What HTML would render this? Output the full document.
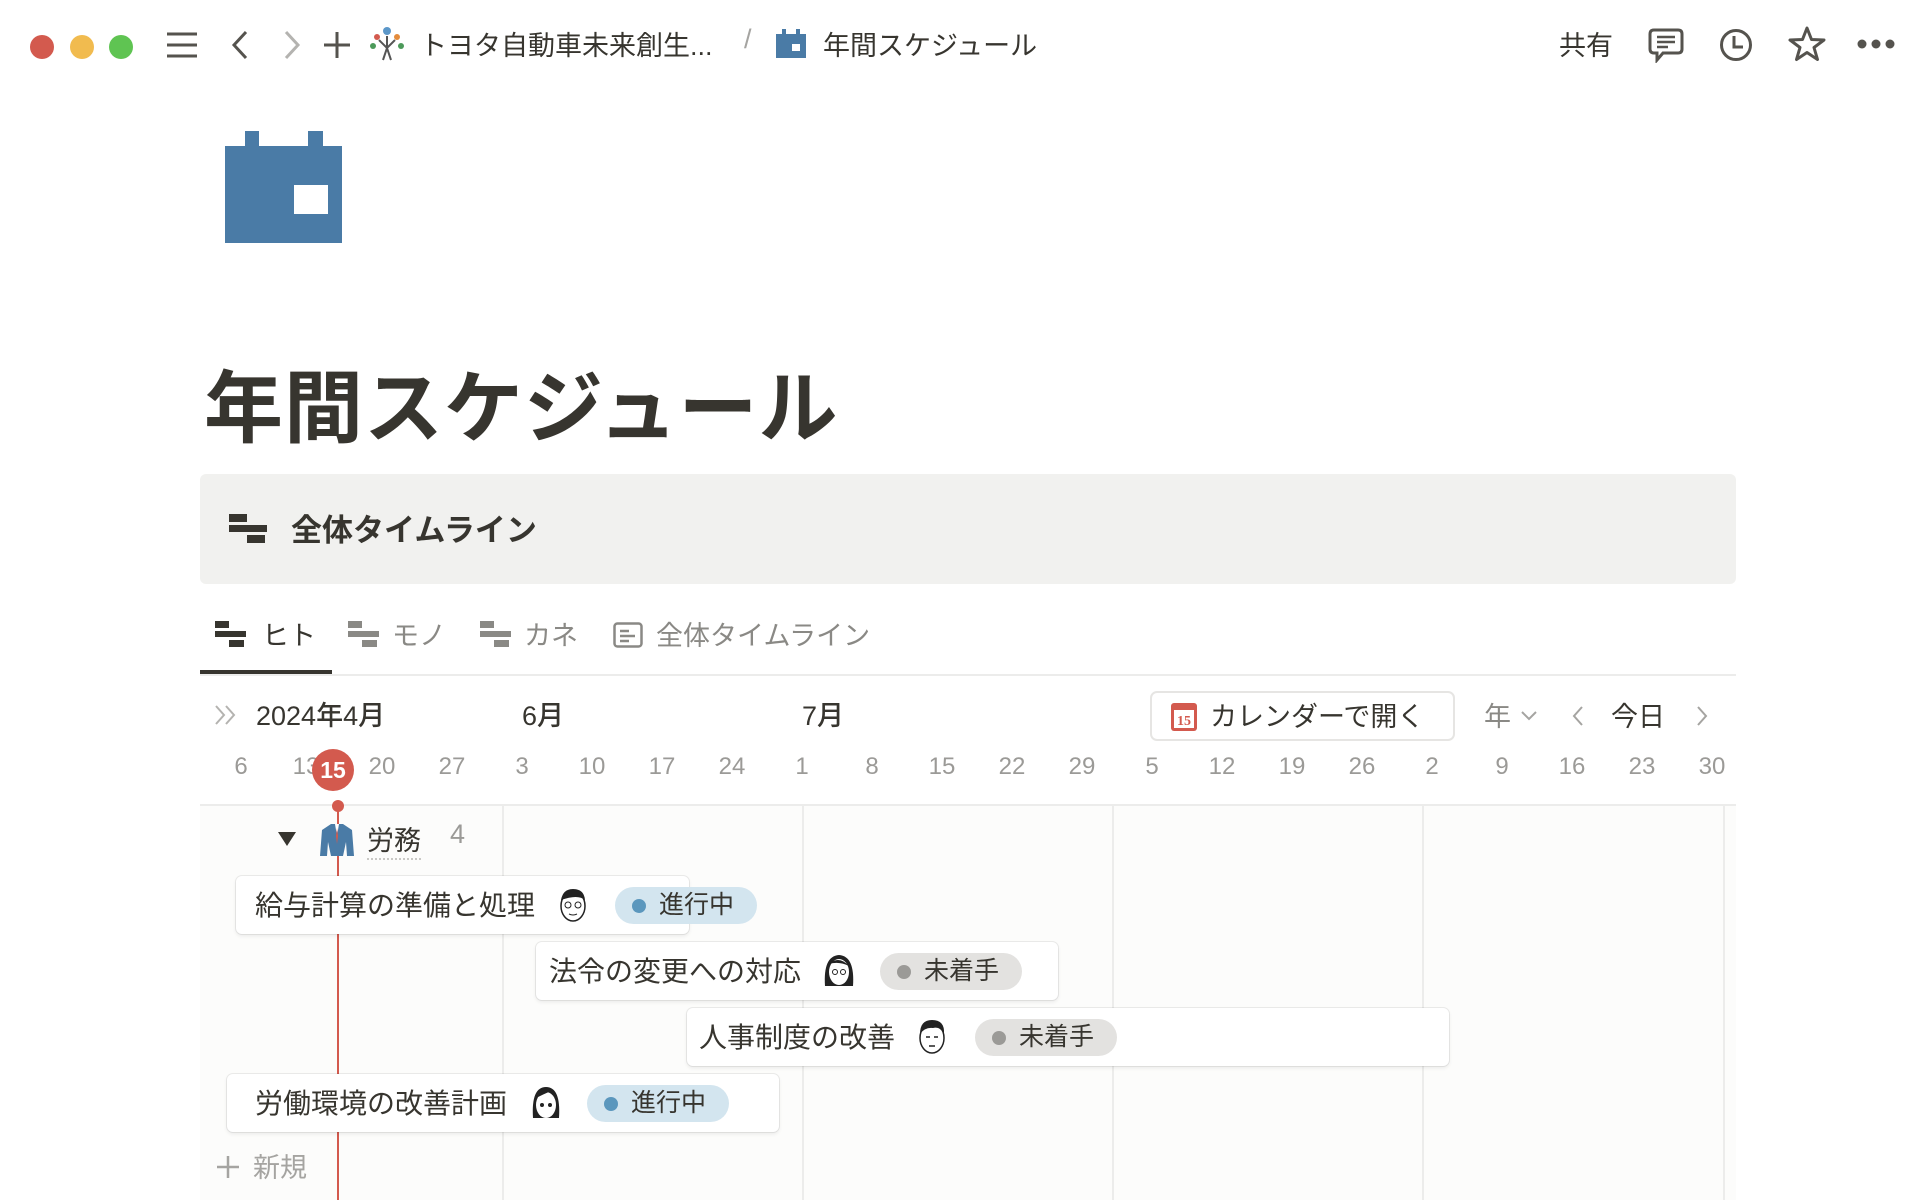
<!DOCTYPE html>
<html><head><meta charset="utf-8"><style>
*{margin:0;padding:0;box-sizing:border-box}
body{width:1920px;height:1200px;background:#fff;font-family:"Liberation Sans","Noto Sans CJK JP",sans-serif;color:#37352f;position:relative;overflow:hidden}
.a{position:absolute;white-space:nowrap}
.dot{position:absolute;width:24px;height:24px;border-radius:50%;top:35px}
.num{position:absolute;top:753px;font-size:24px;color:#9b9a97;width:60px;text-align:center;margin-left:-30px}
.vl{position:absolute;top:806px;bottom:0;width:2px;background:#ececeb}
.card{position:absolute;background:#fff;border-radius:6px;box-shadow:0 0 0 1px rgba(15,15,15,.07),0 2px 4px rgba(15,15,15,.08);height:58px}
.card .t{position:absolute;left:19px;top:8px;font-size:28px}
.av{position:absolute;width:34px;height:38px;top:10px}
.pill{position:absolute;top:11px;height:37px;border-radius:19px;font-size:25px;line-height:37px;padding-left:44px}
.pill:before{content:"";position:absolute;left:17px;top:12px;width:14px;height:14px;border-radius:50%}
.p1{background:#d3e5ef;width:142px}.p1:before{background:#5b97bd}
.p2{background:#e3e2e0;width:142px}.p2:before{background:#9b9a97}
</style></head><body>
<div class="dot" style="left:30px;background:#d35a4e"></div>
<div class="dot" style="left:70px;background:#f1bb4f"></div>
<div class="dot" style="left:109px;background:#5fc452"></div>
<svg class="a" style="left:165px;top:30px" width="34" height="30"><g stroke="#55534e" stroke-width="3"><line x1="2" y1="4" x2="32" y2="4"/><line x1="2" y1="15" x2="32" y2="15"/><line x1="2" y1="26" x2="32" y2="26"/></g></svg>
<svg class="a" style="left:228px;top:29px" width="24" height="32"><path d="M18 3 L6 16 L18 29" stroke="#55534e" stroke-width="3" fill="none"/></svg>
<svg class="a" style="left:280px;top:29px" width="24" height="32"><path d="M6 3 L18 16 L6 29" stroke="#b4b3b0" stroke-width="3" fill="none"/></svg>
<svg class="a" style="left:322px;top:30px" width="30" height="30"><g stroke="#55534e" stroke-width="3"><line x1="15" y1="2" x2="15" y2="28"/><line x1="2" y1="15" x2="28" y2="15"/></g></svg>
<svg class="a" style="left:369px;top:26px" width="36" height="38"><circle cx="18" cy="5" r="4" fill="#5b97c9"/><circle cx="8" cy="11" r="3" fill="#d35a4e"/><circle cx="28" cy="11" r="3" fill="#e38b3c"/><circle cx="4" cy="20" r="3" fill="#4c9a5a"/><circle cx="32" cy="20" r="3" fill="#4c9a5a"/><path d="M18 10 L18 22 M10 14 L18 22 L26 14 M14 34 L18 22 L22 34" stroke="#555" stroke-width="2" fill="none"/></svg>
<div class="a" style="left:420px;top:24px;font-size:27px">トヨタ自動車未来創生...</div>
<div class="a" style="left:744px;top:24px;font-size:27px;color:#a5a4a1">/</div>
<svg class="a" style="left:776px;top:28px" width="30" height="30"><rect x="0" y="6" width="30" height="24" fill="#4a7ba6"/><rect x="6" y="1" width="4" height="6" fill="#4a7ba6"/><rect x="20" y="1" width="4" height="6" fill="#4a7ba6"/><rect x="16" y="16" width="8" height="7" fill="#fff"/></svg>
<div class="a" style="left:823px;top:24px;font-size:27px">年間スケジュール</div>
<div class="a" style="left:1559px;top:24px;font-size:27px">共有</div>
<svg class="a" style="left:1648px;top:27px" width="36" height="36"><path d="M6 3 H30 Q34 3 34 7 V22 Q34 26 30 26 H15 L9 33 V26 H6 Q2 26 2 22 V7 Q2 3 6 3 Z" stroke="#55534e" stroke-width="3" fill="none"/><g stroke="#55534e" stroke-width="2.5"><line x1="9" y1="10" x2="27" y2="10"/><line x1="9" y1="15" x2="27" y2="15"/><line x1="9" y1="20" x2="20" y2="20"/></g></svg>
<svg class="a" style="left:1719px;top:28px" width="34" height="34"><circle cx="17" cy="17" r="14.5" stroke="#55534e" stroke-width="3" fill="none"/><path d="M15 8 V19 H24" stroke="#55534e" stroke-width="3" fill="none"/></svg>
<svg class="a" style="left:1788px;top:26px" width="38" height="36"><path d="M19 2 L23.5 13.5 L36 14 L26 21.5 L29.5 33.5 L19 26.5 L8.5 33.5 L12 21.5 L2 14 L14.5 13.5 Z" stroke="#55534e" stroke-width="3" fill="none" stroke-linejoin="round"/></svg>
<svg class="a" style="left:1857px;top:38px" width="38" height="12"><circle cx="5" cy="6" r="4.5" fill="#55534e"/><circle cx="19" cy="6" r="4.5" fill="#55534e"/><circle cx="33" cy="6" r="4.5" fill="#55534e"/></svg>

<svg class="a" style="left:225px;top:131px" width="118" height="113"><rect x="0" y="15" width="117" height="97" fill="#4a7ba6"/><rect x="20" y="0" width="14" height="16" fill="#4a7ba6"/><rect x="83" y="0" width="15" height="16" fill="#4a7ba6"/><rect x="69" y="54" width="34" height="29" fill="#fff"/></svg>
<div class="a" style="left:204px;top:344px;font-size:79px;font-weight:bold;letter-spacing:1px">年間スケジュール</div>

<div class="a" style="left:200px;top:474px;width:1536px;height:110px;background:#f1f1ef;border-radius:6px"></div>
<svg class="a" style="left:229px;top:514px" width="38" height="30"><rect x="0" y="0" width="18" height="8" fill="#37352f"/><rect x="0" y="11" width="38" height="7" fill="#37352f"/><rect x="18" y="21" width="18" height="8" fill="#37352f"/></svg>
<div class="a" style="left:291px;top:505px;font-size:31px;font-weight:bold">全体タイムライン</div>

<svg class="a" style="left:215px;top:621px" width="32" height="26"><rect x="0" y="0" width="14" height="7" fill="#37352f"/><rect x="0" y="10" width="31" height="6" fill="#37352f"/><rect x="14" y="19" width="15" height="7" fill="#37352f"/></svg>
<div class="a" style="left:262px;top:614px;font-size:27px">ヒト</div>
<svg class="a" style="left:348px;top:621px" width="32" height="26"><rect x="0" y="0" width="14" height="7" fill="#8a8985"/><rect x="0" y="10" width="31" height="6" fill="#8a8985"/><rect x="14" y="19" width="15" height="7" fill="#8a8985"/></svg>
<div class="a" style="left:392px;top:614px;font-size:27px;color:#8a8985">モノ</div>
<svg class="a" style="left:480px;top:621px" width="32" height="26"><rect x="0" y="0" width="14" height="7" fill="#8a8985"/><rect x="0" y="10" width="31" height="6" fill="#8a8985"/><rect x="14" y="19" width="15" height="7" fill="#8a8985"/></svg>
<div class="a" style="left:524px;top:614px;font-size:27px;color:#8a8985">カネ</div>
<svg class="a" style="left:613px;top:622px" width="30" height="26"><rect x="1.5" y="1.5" width="27" height="23" rx="3" stroke="#8a8985" stroke-width="2.5" fill="none"/><g stroke="#8a8985" stroke-width="2.5"><line x1="7" y1="9" x2="16" y2="9"/><line x1="7" y1="14" x2="22" y2="14"/><line x1="7" y1="19" x2="16" y2="19"/></g></svg>
<div class="a" style="left:656px;top:614px;font-size:27px;color:#8a8985">全体タイムライン</div>
<div class="a" style="left:200px;top:670px;width:132px;height:4px;background:#37352f"></div>
<div class="a" style="left:200px;top:674px;width:1536px;height:2px;background:#ececeb"></div>

<svg class="a" style="left:213px;top:703px" width="26" height="24"><path d="M3 3 L11 12 L3 21 M13 3 L21 12 L13 21" stroke="#b4b3b0" stroke-width="2" fill="none"/></svg>
<div class="a" style="left:256px;top:694px;font-size:27px;font-weight:500">2024年4月</div>
<div class="a" style="left:522px;top:694px;font-size:27px;font-weight:500">6月</div>
<div class="a" style="left:802px;top:694px;font-size:27px;font-weight:500">7月</div>
<div class="a" style="left:1150px;top:691px;width:305px;height:50px;border:2px solid #e6e5e3;border-radius:7px"></div>
<svg class="a" style="left:1171px;top:703px" width="26" height="28"><rect x="0" y="0" width="26" height="28" rx="3" fill="#d35a4e"/><rect x="3" y="7" width="20" height="18" fill="#fff"/><text x="13" y="22" font-size="14" font-weight="bold" fill="#d35a4e" text-anchor="middle" font-family="Liberation Serif">15</text></svg>
<div class="a" style="left:1210px;top:695px;font-size:27px">カレンダーで開く</div>
<div class="a" style="left:1484px;top:695px;font-size:27px;color:#8a8985">年</div>
<svg class="a" style="left:1520px;top:708px" width="18" height="14"><path d="M2 4 L9 11 L16 4" stroke="#a5a4a1" stroke-width="2" fill="none"/></svg>
<svg class="a" style="left:1570px;top:704px" width="16" height="24"><path d="M12 3 L4 12 L12 21" stroke="#a5a4a1" stroke-width="2" fill="none"/></svg>
<div class="a" style="left:1611px;top:695px;font-size:27px">今日</div>
<svg class="a" style="left:1694px;top:704px" width="16" height="24"><path d="M4 3 L12 12 L4 21" stroke="#a5a4a1" stroke-width="2" fill="none"/></svg>

<div class="num" style="left:241px">6</div><div class="num" style="left:306px">13</div>
<div class="num" style="left:382px">20</div><div class="num" style="left:452px">27</div>
<div class="num" style="left:522px">3</div><div class="num" style="left:592px">10</div>
<div class="num" style="left:662px">17</div><div class="num" style="left:732px">24</div>
<div class="num" style="left:802px">1</div><div class="num" style="left:872px">8</div>
<div class="num" style="left:942px">15</div><div class="num" style="left:1012px">22</div>
<div class="num" style="left:1082px">29</div><div class="num" style="left:1152px">5</div>
<div class="num" style="left:1222px">12</div><div class="num" style="left:1292px">19</div>
<div class="num" style="left:1362px">26</div><div class="num" style="left:1432px">2</div>
<div class="num" style="left:1502px">9</div><div class="num" style="left:1572px">16</div>
<div class="num" style="left:1642px">23</div><div class="num" style="left:1712px">30</div>
<div class="a" style="left:312px;top:749px;width:42px;height:42px;border-radius:50%;background:#d35a4e;color:#fff;font-size:23px;font-weight:bold;text-align:center;line-height:42px">15</div>

<div class="a" style="left:200px;top:806px;width:1536px;height:394px;background:#fcfcfb"></div>
<div class="a" style="left:200px;top:804px;width:1536px;height:2px;background:#ececeb"></div>
<div class="vl" style="left:502px"></div><div class="vl" style="left:802px"></div>
<div class="vl" style="left:1112px"></div><div class="vl" style="left:1422px"></div><div class="vl" style="left:1723px"></div>
<div class="a" style="left:337px;top:806px;width:2px;height:394px;background:#d35a4e"></div>
<div class="a" style="left:332px;top:800px;width:12px;height:12px;border-radius:50%;background:#d35a4e"></div>

<svg class="a" style="left:277px;top:831px" width="20" height="16"><path d="M1 1 H19 L10 15 Z" fill="#37352f"/></svg>
<svg class="a" style="left:319px;top:822px" width="36" height="36"><path d="M12 2 L24 2 L33 8 L35 34 L28 34 L27 20 L24 34 H12 L9 20 L8 34 L1 34 L3 8 Z" fill="#4a7ba6"/><path d="M16 2 L18 14 L20 2" fill="#fff"/><path d="M18 6 L17 14 L18 22 L19 14 Z" fill="#d35a4e"/></svg>
<div class="a" style="left:367px;top:819px;font-size:27px;border-bottom:2px dotted #c9c8c5">労務</div>
<div class="a" style="left:450px;top:819px;font-size:27px;color:#9b9a97">4</div>

<div class="card" style="left:236px;top:876px;width:453px"><div class="t">給与計算の準備と処理</div>
<svg class="av" style="left:320px"><ellipse cx="17" cy="20" rx="12" ry="15" fill="#fff" stroke="#222" stroke-width="1.5"/><path d="M5 14 Q7 3 17 3 Q28 3 29 14 Q22 8 5 14Z" fill="#222"/><circle cx="12" cy="19" r="3" stroke="#222" fill="none"/><circle cx="22" cy="19" r="3" stroke="#222" fill="none"/><path d="M13 28 Q17 30 21 28" stroke="#222" fill="none"/></svg>
<div class="pill p1" style="left:379px">進行中</div></div>

<div class="card" style="left:536px;top:942px;width:522px"><div class="t" style="left:13px">法令の変更への対応</div>
<svg class="av" style="left:286px"><path d="M3 34 Q1 4 17 3 Q33 4 31 34 Z" fill="#222"/><ellipse cx="17" cy="20" rx="10" ry="13" fill="#fff"/><path d="M7 12 Q17 3 27 14 Q17 9 7 12Z" fill="#222"/><circle cx="13" cy="20" r="2.5" stroke="#222" fill="none"/><circle cx="21" cy="20" r="2.5" stroke="#222" fill="none"/></svg>
<div class="pill p2" style="left:344px">未着手</div></div>

<div class="card" style="left:687px;top:1008px;width:762px"><div class="t" style="left:12px">人事制度の改善</div>
<svg class="av" style="left:228px"><ellipse cx="17" cy="20" rx="12" ry="15" fill="#fff" stroke="#222" stroke-width="1.5"/><path d="M5 16 Q5 2 17 2 Q30 2 29 16 Q25 8 18 10 Q10 9 5 16Z" fill="#222"/><path d="M11 19 h4 M19 19 h4 M14 28 h6" stroke="#222" stroke-width="1.5"/></svg>
<div class="pill p2" style="left:288px">未着手</div></div>

<div class="card" style="left:227px;top:1074px;width:552px"><div class="t" style="left:28px">労働環境の改善計画</div>
<svg class="av" style="left:302px"><path d="M4 34 Q2 3 17 3 Q32 3 30 34 Z" fill="#222"/><ellipse cx="17" cy="21" rx="10" ry="13" fill="#fff"/><path d="M7 14 Q12 4 22 7 Q15 10 7 14Z" fill="#222"/><circle cx="13" cy="21" r="2" fill="#222"/><circle cx="21" cy="21" r="2" fill="#222"/></svg>
<div class="pill p1" style="left:360px">進行中</div></div>

<svg class="a" style="left:216px;top:1155px" width="24" height="24"><g stroke="#a5a4a1" stroke-width="2.5"><line x1="12" y1="1" x2="12" y2="23"/><line x1="1" y1="12" x2="23" y2="12"/></g></svg>
<div class="a" style="left:253px;top:1146px;font-size:27px;color:#a5a4a1">新規</div>
</body></html>
